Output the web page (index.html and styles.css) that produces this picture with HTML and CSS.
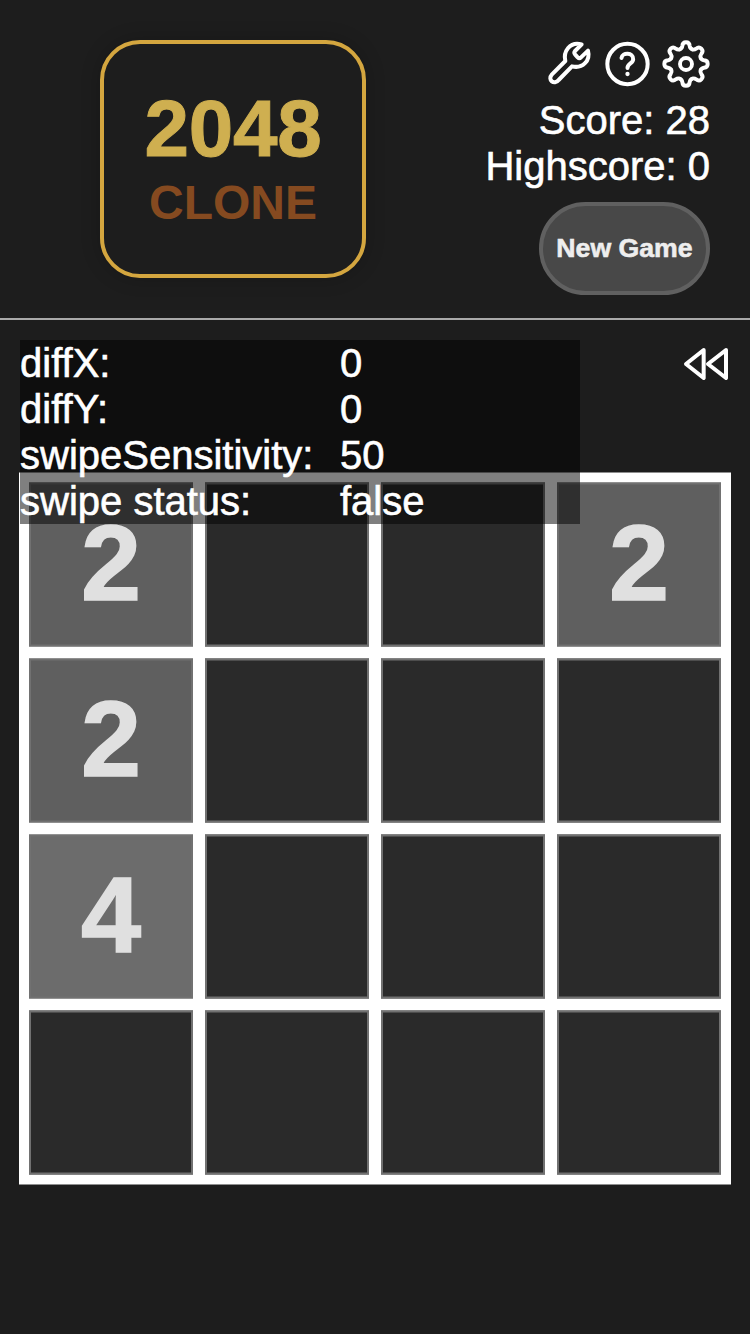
FILE: index.html
```html
<!DOCTYPE html>
<html lang="en">
<head>
<meta charset="utf-8">
<title>2048 Clone</title>
<link rel="stylesheet" href="styles.css">
</head>
<body>
<header class="header">
  <div class="logo">
    <div class="logo-title">2048</div>
    <div class="logo-sub">CLONE</div>
  </div>
  <div class="panel">
    <nav class="icons">
      <svg class="icon" viewBox="46 30 138 138"><path d="M104 93C97 66 117 33 153 43L133 63Q129 68 133 73L141 82Q146 87 151 82L172 62C180 91 156 117 124 109L84 150C71 167 49 150 64 133Z"/></svg>
      <svg class="icon" viewBox="223.500 30 138 138"><circle cx="291" cy="102" r="60.500"/><path d="M273 84C275 66 309 67 308 88C308 101 291 100 291 114"/><circle class="dot" cx="291" cy="132" r="6.500"/></svg>
      <svg class="icon" viewBox="-23 -24 46 46">
        <defs><path id="tooth" d="M-6.100-14.700C-4.300-15.400-3.900-16.400-3.700-18C-3.500-20.600-2.200-21.700 0-21.700S3.500-20.600 3.700-18C3.900-16.400 4.300-15.400 6.100-14.700"/></defs>
        <g class="gear">
          <use href="#tooth"/><use href="#tooth" transform="rotate(45)"/><use href="#tooth" transform="rotate(90)"/><use href="#tooth" transform="rotate(135)"/>
          <use href="#tooth" transform="rotate(180)"/><use href="#tooth" transform="rotate(225)"/><use href="#tooth" transform="rotate(270)"/><use href="#tooth" transform="rotate(315)"/>
          <circle r="6"/>
        </g>
      </svg>
    </nav>
    <div class="score">Score: 28</div>
    <div class="score">Highscore: 0</div>
    <button class="new-game">New Game</button>
  </div>
</header>
<main class="main">
  <div class="debug">
    <span>diffX:</span><span>0</span>
    <span>diffY:</span><span>0</span>
    <span>swipeSensitivity:</span><span>50</span>
    <span>swipe status:</span><span>false</span>
  </div>
  <div class="undo">
    <svg class="undo-icon" viewBox="72 54 132 96"><path d="M131 60L78 102L131 144ZM198 60L144 102L198 144Z"/></svg>
  </div>
  <div class="board">
    <div class="tile t2">2</div><div class="tile"></div><div class="tile"></div><div class="tile t2">2</div>
    <div class="tile t2">2</div><div class="tile"></div><div class="tile"></div><div class="tile"></div>
    <div class="tile t4">4</div><div class="tile"></div><div class="tile"></div><div class="tile"></div>
    <div class="tile"></div><div class="tile"></div><div class="tile"></div><div class="tile"></div>
  </div>
</main>
</body>
</html>
```
FILE: styles.css
```css
* { box-sizing: border-box; }
body {
  margin: 0;
  height: 1334px;
  overflow: hidden;
  background: #1d1d1d;
  color: #fff;
  font: 40px/46px "Liberation Sans", Arial, sans-serif;
}
.header {
  display: flex;
  justify-content: space-between;
  height: 320px;
  padding: 40px 40px 0 100px;
  border-bottom: 2px solid #aaa;
}
.logo {
  display: flex;
  flex-direction: column;
  align-items: center;
  width: 266px;
  height: 238px;
  padding-top: 39px;
  border: 4px solid #d4a63f;
  border-radius: 40px;
  box-shadow: 0 0 20px rgba(0, 0, 0, .2);
  font-weight: bold;
}
.logo-title {
  font-size: 80px;
  line-height: 92px;
  letter-spacing: -.3px;
  color: #cfaf50;
  -webkit-text-stroke: 1px #cfaf50;
}
.logo-sub { font-size: 48px; line-height: 56px; color: #854a20; }
.panel { display: flex; flex-direction: column; align-items: flex-end; }
.icons { display: flex; gap: 12.500px; height: 57px; padding-right: 1px; }
.icon {
  width: 46px;
  height: 46px;
  overflow: visible;
  fill: none;
  stroke: #fff;
  stroke-width: 12;
  stroke-linecap: round;
  stroke-linejoin: round;
}
.gear { stroke-width: 3.900; }
.dot { fill: #fff; stroke: none; }
.score { -webkit-text-stroke: .6px #fff; }
.new-game {
  width: 171px;
  height: 93px;
  margin-top: 13px;
  padding: 0;
  border: 4px solid #606060;
  border-radius: 47px;
  background: #484848;
  color: #eee;
  font: bold 26.670px "Liberation Sans", Arial, sans-serif;
  -webkit-text-stroke: .6px #eee;
}
.main { position: relative; padding: 20px 19px 0; }
.debug {
  position: absolute;
  z-index: 1;
  top: 20px;
  left: 20px;
  display: grid;
  grid-template-columns: 320px 240px;
  background: rgba(0, 0, 0, .5);
  -webkit-text-stroke: .6px #fff;
}
.undo { display: flex; justify-content: flex-end; height: 132px; padding: 8px 3px 0 0; }
.undo-icon {
  width: 44px;
  height: 32px;
  overflow: visible;
  fill: none;
  stroke: #fff;
  stroke-width: 12;
  stroke-linejoin: round;
}
.board {
  display: grid;
  grid-template-columns: repeat(4, 164px);
  grid-auto-rows: 164px;
  gap: 12px;
  width: 712px;
  height: 712px;
  padding: 10px;
  background: #fff;
  transform: translateY(.5px);
}
.tile {
  display: flex;
  align-items: center;
  justify-content: center;
  padding-bottom: 4px;
  border: 2px solid #717171;
  background: #2a2a2a;
  color: #e0e0e0;
  font-size: 108px;
  font-weight: bold;
  -webkit-text-stroke: 1.500px #e0e0e0;
}
.t2 { background: #5f5f5f; }
.t4 { background: #6c6c6c; }
```
